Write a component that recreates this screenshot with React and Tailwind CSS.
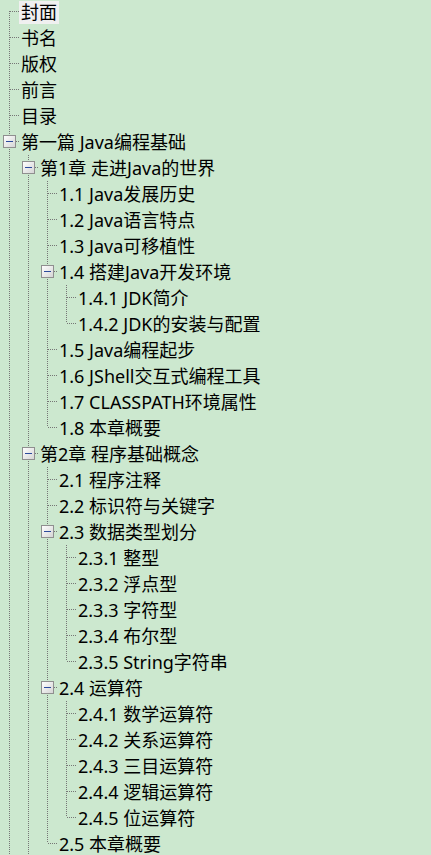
import React from 'react';

// table of contents tree, expanded as in the reader's sidebar
const tree = [
  { t: '封面', sel: true },
  { t: '书名' },
  { t: '版权' },
  { t: '前言' },
  { t: '目录' },
  {
    t: '第一篇 Java编程基础',
    next: true,
    c: [
      {
        t: '第1章 走进Java的世界',
        c: [
          { t: '1.1 Java发展历史' },
          { t: '1.2 Java语言特点' },
          { t: '1.3 Java可移植性' },
          { t: '1.4 搭建Java开发环境', c: [{ t: '1.4.1 JDK简介' }, { t: '1.4.2 JDK的安装与配置' }] },
          { t: '1.5 Java编程起步' },
          { t: '1.6 JShell交互式编程工具' },
          { t: '1.7 CLASSPATH环境属性' },
          { t: '1.8 本章概要' },
        ],
      },
      {
        t: '第2章 程序基础概念',
        next: true,
        c: [
          { t: '2.1 程序注释' },
          { t: '2.2 标识符与关键字' },
          {
            t: '2.3 数据类型划分',
            c: [
              { t: '2.3.1 整型' },
              { t: '2.3.2 浮点型' },
              { t: '2.3.3 字符型' },
              { t: '2.3.4 布尔型' },
              { t: '2.3.5 String字符串' },
            ],
          },
          {
            t: '2.4 运算符',
            c: [
              { t: '2.4.1 数学运算符' },
              { t: '2.4.2 关系运算符' },
              { t: '2.4.3 三目运算符' },
              { t: '2.4.4 逻辑运算符' },
              { t: '2.4.5 位运算符' },
            ],
          },
          { t: '2.5 本章概要' },
        ],
      },
    ],
  },
];

const flatten = (nodes, level = 0, guides = [], out = []) => {
  nodes.forEach((n, i) => {
    const last = i === nodes.length - 1 && !n.next;
    out.push({ n, level, guides, last, first: level === 0 && i === 0 });
    if (n.c) flatten(n.c, level + 1, [...guides, !last], out);
  });
  return out;
};

const DOT = '#767676';

const Guide = ({ line }) => (
  <svg width="19" height="26" className="shrink-0" shapeRendering="crispEdges">
    {line && <line x1="9.5" y1="0" x2="9.5" y2="26" stroke={DOT} strokeDasharray="1 1" />}
  </svg>
);

const Elbow = ({ first, last, open }) => (
  <svg width="19" height="26" className="shrink-0" shapeRendering="crispEdges">
    <line x1="9.5" y1={first ? 12 : 0} x2="9.5" y2={last ? 12 : 26} stroke={DOT} strokeDasharray="1 1" />
    <line x1="10" y1="12.5" x2="19" y2="12.5" stroke={DOT} strokeDasharray="1 1" />
    {open && (
      <g>
        <defs>
          <linearGradient id="boxfill" x1="0" y1="0" x2="1" y2="1">
            <stop offset="0" stopColor="#ffffff" />
            <stop offset="1" stopColor="#d4d4d4" />
          </linearGradient>
        </defs>
        <rect x="3.5" y="6.5" width="12" height="12" fill="url(#boxfill)" stroke="#8f8f8f" />
        <rect x="6" y="12" width="7" height="1.4" fill="#2b4a9c" />
      </g>
    )}
  </svg>
);

export default function App() {
  const rows = flatten(tree);
  return (
    <div className="h-screen overflow-hidden bg-[#cce8cf] font-['Noto_Sans','Noto_Sans_CJK_SC',sans-serif] text-[18px] text-black">
      <div className="-mt-px">
        {rows.map(({ n, level, guides, last, first }, i) => (
          <div key={i} className="flex h-[26px] items-center">
            {guides.map((g, j) => (
              <Guide key={j} line={g} />
            ))}
            <Elbow first={first} last={last} open={!!n.c} />
            <span
              className={
                'h-[23px] whitespace-nowrap px-[2px] leading-[23px] ' + (n.sel ? 'bg-[#f0f0f0]' : '')
              }
            >
              {n.t}
            </span>
          </div>
        ))}
      </div>
    </div>
  );
}
